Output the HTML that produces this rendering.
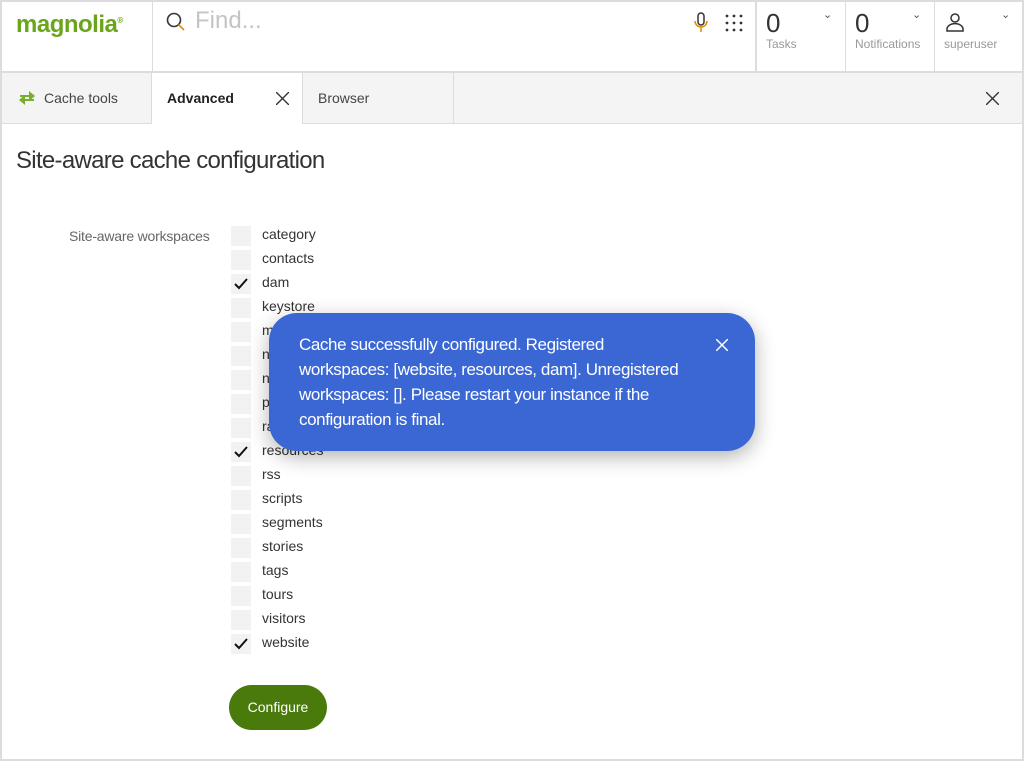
<!DOCTYPE html><html><head><style>
*{box-sizing:border-box;margin:0;padding:0}
body{width:1024px;height:761px;background:#dcdcdc;font-family:"Liberation Sans",sans-serif;position:relative;overflow:hidden}
.p{position:absolute;background:#fff}
.tab{position:absolute;top:73px;height:50px;background:#f4f4f4;font-size:14px;color:#444;line-height:50px}
.cb{position:absolute;left:231px;width:20px;height:20px;background:#f2f2f2}
.cb svg{position:absolute;left:3px;top:4px}
.lb{position:absolute;left:262px;font-size:14px;color:#333}
.x{position:absolute}
</style></head><body>
<div class="p" style="left:2px;top:2px;width:150px;height:69px"><div style="position:absolute;left:14px;top:9px;color:#6aa51c;font-size:24px;font-weight:bold;letter-spacing:-0.5px">magnolia<sup style="font-size:8px">®</sup></div></div>
<div class="p" style="left:153px;top:2px;width:602px;height:69px">
<svg style="position:absolute;left:12px;top:9px" width="22" height="22" viewBox="0 0 22 22" fill="none" stroke="#333" stroke-width="1.6"><circle cx="9" cy="9" r="6.5"/><path d="M13.5 13.5l5.5 5.5" stroke="#e08a00"/></svg>
<div style="position:absolute;left:42px;top:5px;font-size:24px;color:#c4c4c4">Find...</div>
<svg style="position:absolute;left:541px;top:10px" width="14" height="22" viewBox="0 0 14 22" fill="none" stroke="#333" stroke-width="1.5"><rect x="4" y="1" width="6" height="12" rx="3"/><path d="M1 9a6 6 0 0 0 12 0M7 15v5" stroke="#e08a00"/></svg>
<svg style="position:absolute;left:572px;top:12px" width="20" height="20" fill="#333"><circle cx="2" cy="2" r="1.4"/><circle cx="9" cy="2" r="1.4"/><circle cx="16" cy="2" r="1.4"/><circle cx="2" cy="9" r="1.4"/><circle cx="9" cy="9" r="1.4"/><circle cx="16" cy="9" r="1.4"/><circle cx="2" cy="16" r="1.4"/><circle cx="9" cy="16" r="1.4"/><circle cx="16" cy="16" r="1.4"/></svg>
</div>
<div class="p" style="left:757px;top:2px;width:88px;height:69px"><div style="position:absolute;left:9px;top:6px;font-size:26px;color:#333">0</div><div style="position:absolute;left:9px;top:35px;font-size:12px;color:#999">Tasks</div><div style="position:absolute;left:66px;top:6px;font-size:11px;color:#555">⌄</div></div>
<div class="p" style="left:846px;top:2px;width:88px;height:69px"><div style="position:absolute;left:9px;top:6px;font-size:26px;color:#333">0</div><div style="position:absolute;left:9px;top:35px;font-size:12px;color:#999">Notifications</div><div style="position:absolute;left:66px;top:6px;font-size:11px;color:#555">⌄</div></div>
<div class="p" style="left:935px;top:2px;width:87px;height:69px"><svg style="position:absolute;left:10px;top:10px" width="20" height="20" fill="none" stroke="#333" stroke-width="1.5"><circle cx="10" cy="6" r="4"/><path d="M2 19v-2a6 4 0 0 1 16 0v2z"/></svg><div style="position:absolute;left:9px;top:35px;font-size:12px;color:#999">superuser</div><div style="position:absolute;left:66px;top:6px;font-size:11px;color:#555">⌄</div></div>
<div class="tab" style="left:2px;width:149px;padding-left:42px">Cache tools<svg style="position:absolute;left:16px;top:16px" width="18" height="18" viewBox="0 0 18 18" fill="#6aa51c"><path d="M2 6h9V2l6 5-6 5V8H2z M16 12H7v4l-6-5 6-5v4h9z" opacity=".9"/></svg></div>
<div class="tab" style="left:152px;width:150px;background:#fff;padding-left:15px;font-weight:bold;color:#222;height:52px">Advanced<svg class="x" style="left:124px;top:19px" width="13" height="13" stroke="#333" stroke-width="1.4"><path d="M0 0L13 13M13 0L0 13"/></svg></div>
<div class="tab" style="left:303px;width:150px;padding-left:15px">Browser</div>
<div class="tab" style="left:454px;width:568px"><svg class="x" style="left:532px;top:19px" width="13" height="13" stroke="#333" stroke-width="1.4"><path d="M0 0L13 13M13 0L0 13"/></svg></div>
<div class="p" style="left:2px;top:124px;width:1020px;height:635px"></div>
<div style="position:absolute;left:16px;top:147px;font-size:24px;color:#333;letter-spacing:-0.7px">Site-aware cache configuration</div>
<div style="position:absolute;left:69px;top:228px;font-size:14px;color:#666;letter-spacing:-0.2px">Site-aware workspaces</div>
<div class="cb" style="top:226px"></div><div class="lb" style="top:226px">category</div>
<div class="cb" style="top:250px"></div><div class="lb" style="top:250px">contacts</div>
<div class="cb" style="top:274px"><svg width="14" height="12" fill="none" stroke="#111" stroke-width="2"><path d="M1 6l4 4 8-9"/></svg></div><div class="lb" style="top:274px">dam</div>
<div class="cb" style="top:298px"></div><div class="lb" style="top:298px">keystore</div>
<div class="cb" style="top:322px"></div><div class="lb" style="top:322px">messages</div>
<div class="cb" style="top:346px"></div><div class="lb" style="top:346px">news</div>
<div class="cb" style="top:370px"></div><div class="lb" style="top:370px">notes</div>
<div class="cb" style="top:394px"></div><div class="lb" style="top:394px">personas</div>
<div class="cb" style="top:418px"></div><div class="lb" style="top:418px">rating</div>
<div class="cb" style="top:442px"><svg width="14" height="12" fill="none" stroke="#111" stroke-width="2"><path d="M1 6l4 4 8-9"/></svg></div><div class="lb" style="top:442px">resources</div>
<div class="cb" style="top:466px"></div><div class="lb" style="top:466px">rss</div>
<div class="cb" style="top:490px"></div><div class="lb" style="top:490px">scripts</div>
<div class="cb" style="top:514px"></div><div class="lb" style="top:514px">segments</div>
<div class="cb" style="top:538px"></div><div class="lb" style="top:538px">stories</div>
<div class="cb" style="top:562px"></div><div class="lb" style="top:562px">tags</div>
<div class="cb" style="top:586px"></div><div class="lb" style="top:586px">tours</div>
<div class="cb" style="top:610px"></div><div class="lb" style="top:610px">visitors</div>
<div class="cb" style="top:634px"><svg width="14" height="12" fill="none" stroke="#111" stroke-width="2"><path d="M1 6l4 4 8-9"/></svg></div><div class="lb" style="top:634px">website</div>
<div style="position:absolute;left:229px;top:685px;width:98px;height:45px;border-radius:23px;background:#4a7a0b;color:#fff;font-size:14px;text-align:center;line-height:45px">Configure</div>
<div style="position:absolute;left:269px;top:313px;width:486px;height:138px;border-radius:28px;background:#3a67d4;box-shadow:0 6px 20px rgba(0,0,0,.3);color:#fff;font-size:17px;line-height:25px;padding:19px 0 0 30px;letter-spacing:-0.4px;white-space:nowrap">Cache successfully configured. Registered<br>workspaces: [website, resources, dam]. Unregistered<br>workspaces: []. Please restart your instance if the<br>configuration is final.<svg class="x" style="left:447px;top:26px" width="12" height="12" stroke="#fff" stroke-width="1.5"><path d="M0 0L12 12M12 0L0 12"/></svg></div>
</body></html>
